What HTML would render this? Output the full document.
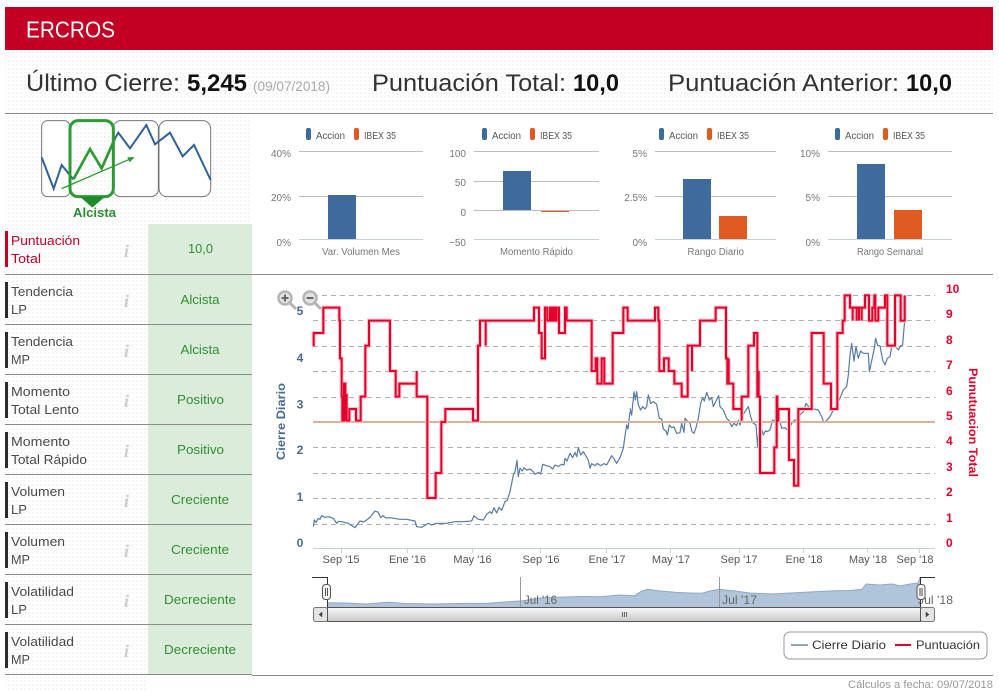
<!DOCTYPE html>
<html lang="es"><head><meta charset="utf-8"><title>ERCROS</title>
<style>
html,body{margin:0;padding:0;background:#fff;width:999px;height:693px;overflow:hidden}
svg{display:block;position:absolute;left:0;top:0}
text{font-family:"Liberation Sans",sans-serif}
.h{font-size:24px;fill:#333}
.hb{font-size:24px;fill:#111;font-weight:bold}
.lab{font-size:13px;fill:#4a4a4a}
.val{font-size:13px;fill:#2f8f2f}
.inf{font-family:"Liberation Serif",serif;font-style:italic;font-weight:bold;font-size:18px;fill:#ccc}
.t{font-size:10px;fill:#777}
.x{font-size:11px;fill:#555;text-anchor:middle}
.ly{font-size:12px;font-weight:bold;fill:#4a6a94}
.ry{font-size:12px;font-weight:bold;fill:#e4002b}
</style></head><body>
<svg width="999" height="693" viewBox="0 0 999 693" xmlns="http://www.w3.org/2000/svg">
<defs>
<pattern id="d" width="4" height="4" patternUnits="userSpaceOnUse"><rect x="0" y="0" width="2" height="2" fill="#f5f5f5"/></pattern>
<path id="r1" d="M161 214V174H190V98H238V137H240V250H245V365H247V437H252V326H256V437V360H260V437H268V402H288V437H302V365H316V212H327V137H390V288H407V365H418V326H470V288V365H502V669H527V594H544V441H556V402H639V437H654V212H660V137H677V212V137H822V98H837V174H845V250H855V98H862V137H870V98H875V137H880V98H885V137H890V98H897V174H915V98H920V137H995V288H1007V250H1012V326H1025V250H1033V326H1058V174H1090V98H1103V137H1110"/>
<path id="r2" d="M0 137H75V98H85V137H88V288H102V250H116V288H133V326H155V365H173V212H186V288V212H210V137H257V98H288V250H292V326H296V250V326H310V402H335V437V365H355V212H372V174H382V365H386V288V365H390V594H433V517H440V365H442V437H445V402H477V555H492V632H505V402H545V174H581V326H603V402H622V174H638V137H644V61H660V98H668V137V98H680V137V98H687V137V98H695V137V98H705V61H717V137H727V98H733V61H736V137H745V98H765V61H772V212H795V61H812V137H824V61"/>
</defs>

<!-- dotted backgrounds -->
<rect x="5" y="50" width="988" height="63" fill="url(#d)"/>
<rect x="5" y="113" width="247" height="111" fill="url(#d)"/>
<rect x="5" y="224" width="141" height="466" fill="url(#d)"/>

<!-- header -->
<rect x="5" y="7" width="988" height="43" fill="#c30024"/>
<text x="26" y="37.5" font-size="23" fill="#fff" textLength="89" lengthAdjust="spacingAndGlyphs">ERCROS</text>

<text class="h" x="26" y="91" textLength="154" lengthAdjust="spacingAndGlyphs">Último Cierre:</text>
<text class="hb" x="187" y="91" textLength="60" lengthAdjust="spacingAndGlyphs">5,245</text>
<text x="253" y="91" font-size="13.5" fill="#aaa" textLength="77" lengthAdjust="spacingAndGlyphs">(09/07/2018)</text>
<text class="h" x="372" y="91" textLength="194" lengthAdjust="spacingAndGlyphs">Puntuación Total:</text>
<text class="hb" x="573" y="91" textLength="46" lengthAdjust="spacingAndGlyphs">10,0</text>
<text class="h" x="668" y="91" textLength="231" lengthAdjust="spacingAndGlyphs">Puntuación Anterior:</text>
<text class="hb" x="906" y="91" textLength="46" lengthAdjust="spacingAndGlyphs">10,0</text>

<rect x="5" y="113" width="988" height="1" fill="#8c8c8c"/>

<!-- trend diagram -->
<g transform="translate(30 115) scale(.33333)">
<g fill="#fff" stroke="#777" stroke-width="3">
<rect x="35" y="17" width="85" height="228" rx="18"/>
<rect x="250" y="17" width="135" height="228" rx="22"/>
<rect x="387" y="17" width="155" height="228" rx="24"/>
</g>
<path d="M35 127L71 221L95 150L130 193M255 70L265 53L300 100L349 30L375 88L420 53L458 124L492 90L542 195" fill="none" stroke="#2f6199" stroke-width="6"/>
<rect x="120" y="17" width="130" height="228" rx="24" fill="none" stroke="#2d9a33" stroke-width="9"/>
<path d="M130 193L180 102L215 160L255 70" fill="none" stroke="#2d9a33" stroke-width="8"/>
<path d="M95 221L305 130" stroke="#2d9a33" stroke-width="4" fill="none"/>
<path d="M314 126L292 127L299 142Z" fill="#2d9a33"/>
<path d="M150 245H225L187 278Z" fill="#1f8a2a"/>
</g>
<text x="73" y="217" font-size="12.5" font-weight="bold" fill="#2b8e2f" textLength="43" lengthAdjust="spacingAndGlyphs">Alcista</text>

<!-- mini bar charts -->
<g fill="none" stroke="#bdbdbd" stroke-width="1">
<path d="M299 151.5H423M299 196.5H423M474 151.5H599M474 181.5H599M474 210.5H599M655 151.5H776M655 196.5H776M828 151.5H952M828 196.5H952"/>
</g>
<g fill="none" stroke="#c6d0dc" stroke-width="1">
<path d="M299 239.5H423M474 239.5H599M655 239.5H776M828 239.5H952"/>
</g>
<g fill="#3f6a9c">
<rect x="328" y="195" width="28" height="44"/>
<rect x="503" y="171" width="28" height="39"/>
<rect x="683" y="179" width="28" height="60"/>
<rect x="857" y="164" width="28" height="75"/>
</g>
<g fill="#de5a20">
<rect x="541" y="211" width="28" height="1"/>
<rect x="719" y="216" width="28" height="23"/>
<rect x="894" y="210" width="28" height="29"/>
</g>
<g fill="#3f6a9c">
<rect x="306" y="128" width="5" height="12" rx="2"/><rect x="482" y="128" width="5" height="12" rx="2"/><rect x="659" y="128" width="5" height="12" rx="2"/><rect x="835" y="128" width="5" height="12" rx="2"/>
</g>
<g fill="#de5a20">
<rect x="354" y="128" width="5" height="12" rx="2"/><rect x="530" y="128" width="5" height="12" rx="2"/><rect x="707" y="128" width="5" height="12" rx="2"/><rect x="883" y="128" width="5" height="12" rx="2"/>
</g>
<g font-size="10" fill="#555">
<text x="316" y="139" textLength="29" lengthAdjust="spacingAndGlyphs">Accion</text><text x="364" y="139" textLength="32" lengthAdjust="spacingAndGlyphs">IBEX 35</text>
<text x="492" y="139" textLength="29" lengthAdjust="spacingAndGlyphs">Accion</text><text x="540" y="139" textLength="32" lengthAdjust="spacingAndGlyphs">IBEX 35</text>
<text x="669" y="139" textLength="29" lengthAdjust="spacingAndGlyphs">Accion</text><text x="717" y="139" textLength="32" lengthAdjust="spacingAndGlyphs">IBEX 35</text>
<text x="845" y="139" textLength="29" lengthAdjust="spacingAndGlyphs">Accion</text><text x="893" y="139" textLength="32" lengthAdjust="spacingAndGlyphs">IBEX 35</text>
</g>
<g text-anchor="end">
<text class="t" x="291" y="157">40%</text><text class="t" x="291" y="201">20%</text><text class="t" x="291" y="246">0%</text>
<text class="t" x="466" y="157">100</text><text class="t" x="466" y="186">50</text><text class="t" x="466" y="216">0</text><text class="t" x="466" y="246">−50</text>
<text class="t" x="647" y="157">5%</text><text class="t" x="647" y="201">2.5%</text><text class="t" x="647" y="246">0%</text>
<text class="t" x="820" y="157">10%</text><text class="t" x="820" y="201">5%</text><text class="t" x="820" y="246">0%</text>
</g>
<text class="t" x="322" y="255" textLength="78" lengthAdjust="spacingAndGlyphs">Var. Volumen Mes</text>
<text class="t" x="500" y="255" textLength="73" lengthAdjust="spacingAndGlyphs">Momento Rápido</text>
<text class="t" x="687.5" y="255" textLength="56.5" lengthAdjust="spacingAndGlyphs">Rango Diario</text>
<text class="t" x="857" y="255" textLength="66" lengthAdjust="spacingAndGlyphs">Rango Semanal</text>

<!-- table -->
<rect x="148" y="224" width="104" height="451" fill="#dcecdb"/>
<rect x="5" y="274" width="988" height="1" fill="#8c8c8c"/>
<g fill="#8c8c8c">
<rect x="5" y="324" width="247" height="1"/><rect x="5" y="374" width="247" height="1"/><rect x="5" y="424" width="247" height="1"/><rect x="5" y="474" width="247" height="1"/><rect x="5" y="524" width="247" height="1"/><rect x="5" y="574" width="247" height="1"/><rect x="5" y="624" width="247" height="1"/><rect x="5" y="674" width="247" height="1"/>
<rect x="252" y="675" width="741" height="1"/>
</g>
<rect x="5" y="231" width="3" height="36" fill="#c30024"/>
<g fill="#2b2b2b">
<rect x="5" y="282" width="3" height="36"/><rect x="5" y="332" width="3" height="36"/><rect x="5" y="382" width="3" height="36"/><rect x="5" y="432" width="3" height="36"/><rect x="5" y="482" width="3" height="36"/><rect x="5" y="532" width="3" height="36"/><rect x="5" y="582" width="3" height="36"/><rect x="5" y="632" width="3" height="36"/>
</g>
<text x="11" y="245" font-size="13" fill="#c30024" textLength="69" lengthAdjust="spacingAndGlyphs">Puntuación</text>
<text x="11" y="263" font-size="13" fill="#c30024" textLength="30" lengthAdjust="spacingAndGlyphs">Total</text>
<text class="lab" x="11" y="296" textLength="62" lengthAdjust="spacingAndGlyphs">Tendencia</text><text class="lab" x="11" y="314">LP</text>
<text class="lab" x="11" y="346" textLength="62" lengthAdjust="spacingAndGlyphs">Tendencia</text><text class="lab" x="11" y="364" textLength="19" lengthAdjust="spacingAndGlyphs">MP</text>
<text class="lab" x="11" y="396" textLength="59" lengthAdjust="spacingAndGlyphs">Momento</text><text class="lab" x="11" y="414" textLength="68" lengthAdjust="spacingAndGlyphs">Total Lento</text>
<text class="lab" x="11" y="446" textLength="59" lengthAdjust="spacingAndGlyphs">Momento</text><text class="lab" x="11" y="464" textLength="76" lengthAdjust="spacingAndGlyphs">Total Rápido</text>
<text class="lab" x="11" y="496" textLength="54" lengthAdjust="spacingAndGlyphs">Volumen</text><text class="lab" x="11" y="514">LP</text>
<text class="lab" x="11" y="546" textLength="54" lengthAdjust="spacingAndGlyphs">Volumen</text><text class="lab" x="11" y="564" textLength="19" lengthAdjust="spacingAndGlyphs">MP</text>
<text class="lab" x="11" y="596" textLength="63" lengthAdjust="spacingAndGlyphs">Volatilidad</text><text class="lab" x="11" y="614">LP</text>
<text class="lab" x="11" y="646" textLength="63" lengthAdjust="spacingAndGlyphs">Volatilidad</text><text class="lab" x="11" y="664" textLength="19" lengthAdjust="spacingAndGlyphs">MP</text>

<text class="inf" x="124" y="257">i</text><text class="inf" x="124" y="307">i</text><text class="inf" x="124" y="357">i</text><text class="inf" x="124" y="407">i</text><text class="inf" x="124" y="457">i</text><text class="inf" x="124" y="507">i</text><text class="inf" x="124" y="557">i</text><text class="inf" x="124" y="607">i</text><text class="inf" x="124" y="657">i</text>

<text class="val" x="188" y="253" textLength="25" lengthAdjust="spacingAndGlyphs">10,0</text>
<text class="val" x="180.5" y="304" textLength="39" lengthAdjust="spacingAndGlyphs">Alcista</text>
<text class="val" x="180.5" y="354" textLength="39" lengthAdjust="spacingAndGlyphs">Alcista</text>
<text class="val" x="177" y="404" textLength="47" lengthAdjust="spacingAndGlyphs">Positivo</text>
<text class="val" x="177" y="454" textLength="47" lengthAdjust="spacingAndGlyphs">Positivo</text>
<text class="val" x="171" y="504" textLength="58" lengthAdjust="spacingAndGlyphs">Creciente</text>
<text class="val" x="171" y="554" textLength="58" lengthAdjust="spacingAndGlyphs">Creciente</text>
<text class="val" x="164" y="604" textLength="72" lengthAdjust="spacingAndGlyphs">Decreciente</text>
<text class="val" x="164" y="654" textLength="72" lengthAdjust="spacingAndGlyphs">Decreciente</text>

<!-- main chart grid -->
<g stroke="#b0b0b0" stroke-width="1" stroke-dasharray="5 4" fill="none">
<path d="M313 295.5H935M313 320.5H935M313 346.5H935M313 371.5H935M313 397.5H935M313 447.5H935M313 473.5H935M313 498.5H935M313 524.5H935"/>
</g>
<path d="M313 548.5H935" stroke="#c4d0de" stroke-width="1"/>
<path d="M341.5 548V553M407.5 548V553M472.5 548V553M540.5 548V553M606.5 548V553M670.5 548V553M739.5 548V553M803.5 548V553M867.5 548V553M919.5 548V553" stroke="#c4d0de" stroke-width="1"/>

<!-- price line -->
<g fill="none" stroke="#557aa6" stroke-width="3.6" stroke-linejoin="round">
<path transform="translate(260 275) scale(.33333)" d="M160 755L163 735L168 742L175 730L180 733L185 722L195 727L205 725L220 730L230 745L235 739L245 740L265 745L285 758L300 738L310 741L320 735L330 727L345 708L355 712L362 728L368 722L378 729L390 728L420 733L440 733L465 738L470 755L485 757L505 745L515 750L530 745L560 745L585 740L610 740L635 738L642 722L655 733L670 735L680 718L690 710L695 716L702 698L710 714L717 697L725 706L735 680L742 675L750 650L755 625L760 600L765 590L771 556L775 605L780 580L787 588L792 578L800 585L810 582L820 590L825 598L835 592L842 597L848 568L860 572L870 575L878 582L885 570L895 574L905 568L912 570L915 550L921 558L930 535L938 548L945 532L950 545L955 518L962 540L970 530L985 555L990 580L995 566L1005 572L1012 565L1022 572L1032 566L1040 570L1055 542L1062 552L1070 565L1080 548L1090 520L1094 490L1100 450L1104 462L1110 410"/>
<path transform="translate(630 275) scale(.33333)" d="M0 400L5 420L12 350L16 375L20 350L25 390L32 405L38 395L45 402L50 395L55 360L62 385L70 380L80 388L88 430L95 432L100 462L108 468L112 480L118 450L125 458L132 456L140 475L150 473L155 445L162 472L165 430L172 438L180 445L186 470L192 475L198 458L205 430L212 385L218 368L223 378L230 352L238 375L245 368L250 395L258 378L266 362L270 395L280 405L290 430L298 438L305 455L312 445L320 452L325 436L330 450L335 425L342 415L348 405L355 395L362 425L368 443L378 450L383 515L388 440L394 460L400 480L406 468L412 470L420 465L428 435L438 440L450 440L455 460L465 458L475 468L485 445L492 436L502 434L510 420L520 410L528 385L540 400L550 402L565 405L575 425L582 443L590 436L600 425L610 405L620 390L630 370L640 345L650 335L655 300L660 240L665 205L672 258L678 215L685 250L692 228L700 235L715 235L718 290L725 258L732 225L737 190L743 212L750 212L758 255L765 270L772 250L780 245L785 215L795 212L805 225L812 212L818 210L822 160L825 130L826 95"/>
</g>

<!-- orange line -->
<rect x="313" y="421" width="622" height="2" fill="#dcb09a"/>

<!-- score line -->
<g fill="none" stroke-linejoin="miter">
<g transform="translate(260 275) scale(.33333)"><use href="#r1" stroke="#fbc4cc" stroke-width="12"/><use href="#r1" stroke="#e4002b" stroke-width="6"/></g>
<g transform="translate(630 275) scale(.33333)"><use href="#r2" stroke="#fbc4cc" stroke-width="12"/><use href="#r2" stroke="#e4002b" stroke-width="6"/></g>
</g>

<!-- axis labels -->
<g text-anchor="middle">
<text class="ly" x="300" y="315">5</text><text class="ly" x="300" y="362">4</text><text class="ly" x="300" y="408.5">3</text><text class="ly" x="300" y="454">2</text><text class="ly" x="300" y="501">1</text><text class="ly" x="300" y="547">0</text>
</g>
<text class="ly" transform="translate(285 460) rotate(-90)" x="0" y="0" textLength="77" lengthAdjust="spacingAndGlyphs">Cierre Diario</text>
<g>
<text class="ry" x="946" y="293">10</text><text class="ry" x="946" y="318">9</text><text class="ry" x="946" y="344">8</text><text class="ry" x="946" y="369">7</text><text class="ry" x="946" y="395">6</text><text class="ry" x="946" y="420">5</text><text class="ry" x="946" y="445">4</text><text class="ry" x="946" y="471">3</text><text class="ry" x="946" y="496">2</text><text class="ry" x="946" y="522">1</text><text class="ry" x="946" y="547">0</text>
</g>
<text class="ry" transform="translate(969 368) rotate(90)" x="0" y="0" textLength="109" lengthAdjust="spacingAndGlyphs">Punutuacion Total</text>

<text class="x" x="341" y="563">Sep '15</text><text class="x" x="407.5" y="563">Ene '16</text><text class="x" x="472.5" y="563">May '16</text><text class="x" x="541" y="563">Sep '16</text><text class="x" x="607" y="563">Ene '17</text><text class="x" x="671" y="563">May '17</text><text class="x" x="739" y="563">Sep '17</text><text class="x" x="804" y="563">Ene '18</text><text class="x" x="868" y="563">May '18</text><text class="x" x="915" y="563">Sep '18</text>

<!-- zoom icons -->
<g fill="#e2e2e2" stroke="#b4b4b4" stroke-width="2.4">
<circle cx="285" cy="298" r="6.5"/><circle cx="310" cy="298" r="6.5"/>
</g>
<path d="M290 303L296 309M315 303L321 309" stroke="#b4b4b4" stroke-width="3" fill="none"/>
<path d="M281.5 298H288.5M285 294.5V301.5M306.5 298H313.5" stroke="#666" stroke-width="2" fill="none"/>

<!-- navigator -->
<path d="M327.5 607V602.7L345 603L367 604L378 603L389 602.3L405 603.5L434 604L460 603.5L487 603.3L505 602L523 600.7L540 598L559 597.3L580 596.5L600 596.8L620 595L634.5 595.7L642 591L648 589.3L660 591L675 592.3L690 593L701 593.3L710 591L719 589.3L735 591L750 593L773 594L790 593L810 592L835 590.7L850 590.5L862 589.3L866 584L880 585L892 584L900 586L910 584L918 583.3L920 577V607Z" fill="#b0c4da" stroke="none"/>
<path d="M327.5 602.7L345 603L367 604L378 603L389 602.3L405 603.5L434 604L460 603.5L487 603.3L505 602L523 600.7L540 598L559 597.3L580 596.5L600 596.8L620 595L634.5 595.7L642 591L648 589.3L660 591L675 592.3L690 593L701 593.3L710 591L719 589.3L735 591L750 593L773 594L790 593L810 592L835 590.7L850 590.5L862 589.3L866 584L880 585L892 584L900 586L910 584L918 583.3L920 577" fill="none" stroke="#8fa8c8" stroke-width="1"/>
<path d="M520.5 577V607M719.5 577V607" stroke="#999" stroke-width="1"/>
<text x="524" y="604" font-size="12" fill="#666" textLength="33" lengthAdjust="spacingAndGlyphs">Jul '16</text>
<text x="722" y="604" font-size="12" fill="#666" textLength="35" lengthAdjust="spacingAndGlyphs">Jul '17</text>
<text x="918" y="604" font-size="12" fill="#666" textLength="35" lengthAdjust="spacingAndGlyphs">Jul '18</text>
<path d="M312 577.5H327.5V607M935 577.5H920.5V607" fill="none" stroke="#333" stroke-width="1"/>
<linearGradient id="g" x1="0" y1="0" x2="0" y2="1"><stop offset="0" stop-color="#fafafa"/><stop offset="1" stop-color="#c8c8c8"/></linearGradient>
<rect x="313.5" y="607.5" width="14" height="14" fill="#e4e4e4" stroke="#777" rx="2"/>
<rect x="920.5" y="607.5" width="14" height="14" fill="#e4e4e4" stroke="#777" rx="2"/>
<rect x="327.5" y="607.5" width="593" height="14" fill="url(#g)" stroke="#555"/>
<path d="M622.5 612V617M624.5 612V617M626.5 612V617" stroke="#666" stroke-width="1"/>
<path d="M319 614.5L322 612V617ZM926 612V617L929 614.5Z" fill="#444" stroke="#444" stroke-width=".5"/>
<rect x="322.5" y="584.5" width="8" height="15" rx="3" fill="#f4f4f4" stroke="#555"/>
<path d="M325.5 588V596M327.5 588V596" stroke="#555" stroke-width="1"/>
<rect x="917" y="584.5" width="8" height="15" rx="3" fill="#f4f4f4" stroke="#555"/>
<path d="M920 588V596M922 588V596" stroke="#555" stroke-width="1"/>

<!-- legend -->
<rect x="784" y="632" width="203" height="27" rx="6" fill="#fff" stroke="#999"/>
<rect x="791" y="644" width="17" height="2" fill="#8fa5c0"/>
<text x="812" y="649" font-size="12" fill="#333" textLength="74" lengthAdjust="spacingAndGlyphs">Cierre Diario</text>
<rect x="895" y="644" width="16" height="2" fill="#e4002b"/>
<text x="916" y="649" font-size="12" fill="#333" textLength="64" lengthAdjust="spacingAndGlyphs">Puntuación</text>

<text x="848" y="688" font-size="11" fill="#999" textLength="145" lengthAdjust="spacingAndGlyphs">Cálculos a fecha: 09/07/2018</text>
</svg>
</body></html>
